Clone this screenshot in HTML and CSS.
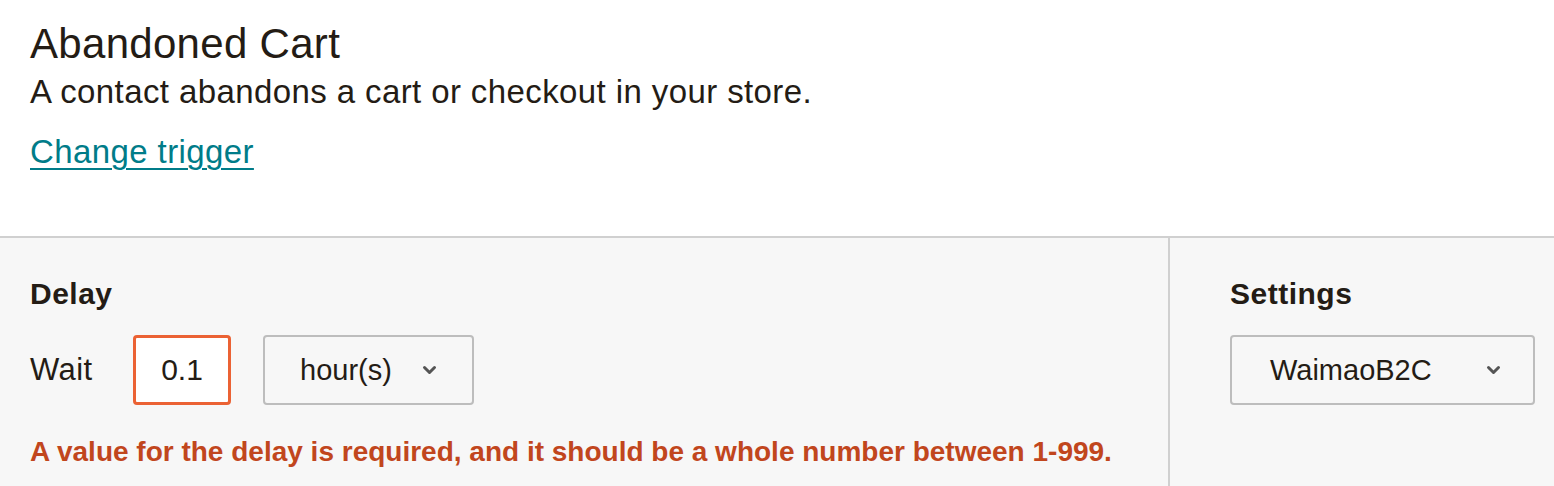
FILE: index.html
```html
<!DOCTYPE html>
<html lang="en">
<head>
    <meta charset="UTF-8">
    <title>Abandoned Cart - Trigger</title>
    <link rel="stylesheet" href="styles.css">
</head>
<body>
    <header class="trigger">
        <h1 class="trigger-title">Abandoned Cart</h1>
        <p class="trigger-desc">A contact abandons a cart or checkout in your store.</p>
        <a class="trigger-link" href="#">Change trigger</a>
    </header>

    <section class="panel">
        <div class="panel-main">
            <h2 class="panel-heading">Delay</h2>
            <div class="delay-row">
                <label for="delay" class="delay-label">Wait</label>
                <input type="text" id="delay" class="delay-input" value="0.1">
                <div class="select unit-select">
                    <span>hour(s)</span>
                    <svg class="chevron" width="15" height="10" viewBox="0 0 15 10"><path d="M2.5 2.5l5 5 5-5" fill="none" stroke="#555" stroke-width="3" stroke-linecap="round" stroke-linejoin="round"/></svg>
                </div>
            </div>
            <p class="error-text">A value for the delay is required, and it should be a whole number between 1-999.</p>
        </div>
        <aside class="panel-side">
            <h2 class="panel-heading">Settings</h2>
            <div class="select store-select">
                <span>WaimaoB2C</span>
                <svg class="chevron" width="15" height="10" viewBox="0 0 15 10"><path d="M2.5 2.5l5 5 5-5" fill="none" stroke="#555" stroke-width="3" stroke-linecap="round" stroke-linejoin="round"/></svg>
            </div>
        </aside>
    </section>
</body>
</html>
```
FILE: styles.css
```css
body {
    margin: 0;
    font-family: 'Liberation Sans', Arial, sans-serif;
    color: #241c15;
    background: #fff;
}
.trigger {
    height: 238px;
    padding: 20px 30px 0;
    box-sizing: border-box;
    border-bottom: 2px solid #d0d0d0;
}
.trigger-title { margin: 0; font-size: 42px; font-weight: normal; line-height: 48px; letter-spacing: 0.3px; }
.trigger-desc { margin: 0; font-size: 33px; line-height: 47px; letter-spacing: 0.4px; }
.trigger-link {
    display: inline-block;
    margin-top: 14px;
    font-size: 33px;
    line-height: 45px;
    letter-spacing: 0.4px;
    color: #007c89;
    text-decoration: underline;
    text-underline-offset: 5px;
    text-decoration-thickness: 2px;
}
.panel {
    display: flex;
    height: 248px;
    background: #f7f7f7;
}
.panel-main {
    width: 1170px;
    padding: 38px 30px 0;
    box-sizing: border-box;
    border-right: 2px solid #d0d0d0;
}
.panel-side {
    flex: 1;
    padding: 38px 19px 0 60px;
}
.panel-heading { margin: 0; font-size: 30px; font-weight: bold; line-height: 36px; letter-spacing: 0.5px; }
.delay-row {
    display: flex;
    align-items: center;
    margin-top: 23px;
}
.delay-label { font-size: 31px; letter-spacing: 0.4px; width: 103px; }
.delay-input {
    width: 98px;
    height: 70px;
    margin-right: 32px;
    box-sizing: border-box;
    border: 3px solid #eb6234;
    border-radius: 4px;
    background: #fff;
    text-align: center;
    font-family: inherit;
    font-size: 30px;
    color: #241c15;
    padding: 0;
}
.select {
    display: flex;
    align-items: center;
    height: 70px;
    box-sizing: border-box;
    border: 2px solid #bdbdbd;
    border-radius: 4px;
    background: #f7f7f7;
    font-size: 29px;
}
.unit-select { width: 211px; padding-left: 35px; }
.unit-select .chevron { margin-left: 30px; }
.store-select { width: 305px; padding-left: 38px; margin-top: 23px; }
.store-select .chevron { margin-left: 54px; }
.error-text {
    margin: 30px 0 0;
    font-size: 28px;
    line-height: 34px;
    font-weight: bold;
    color: #c1461d;
}
```
